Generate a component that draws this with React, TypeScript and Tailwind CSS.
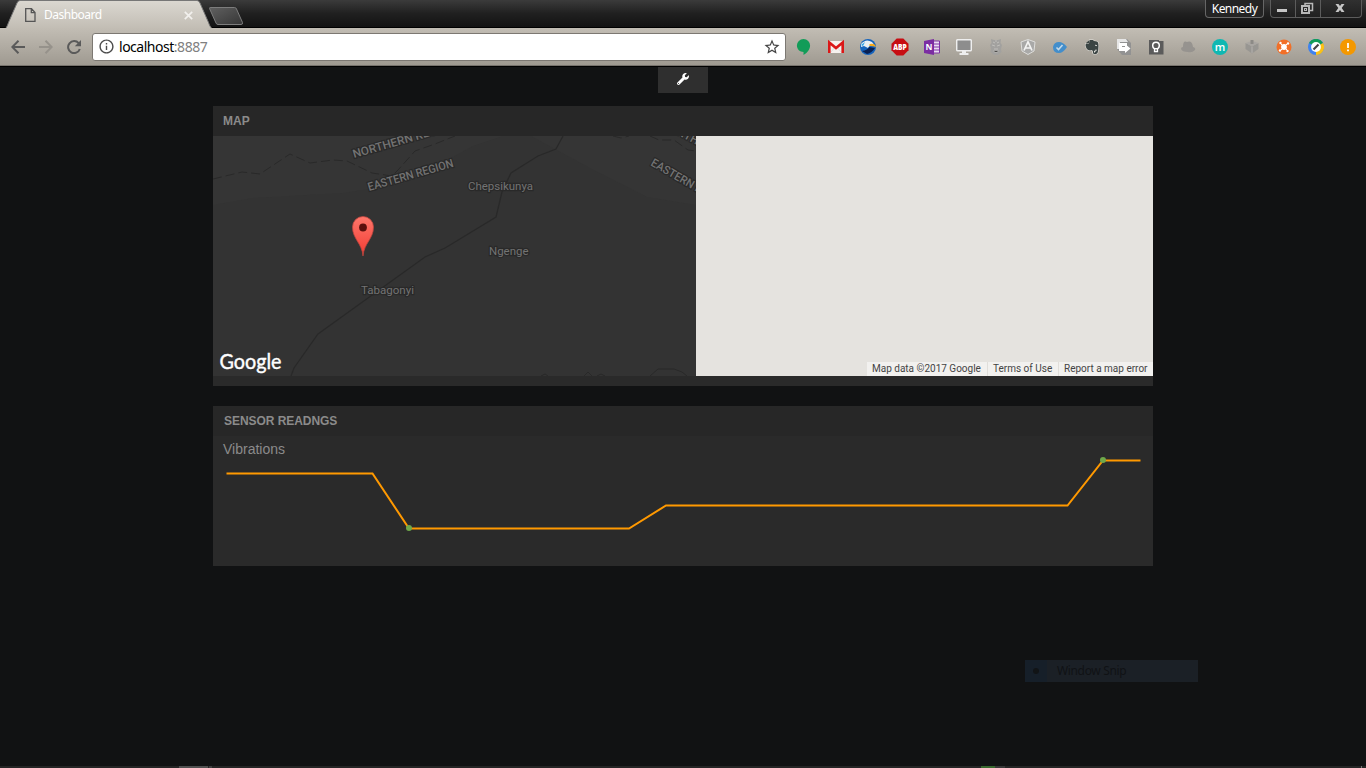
import type { ReactNode } from "react";
import { MdInfoOutline, MdStarBorder } from "react-icons/md";
import { FaWrench } from "react-icons/fa";

function WindowControls() {
  return (
    <div className="relative flex items-start font-['Noto_Sans',sans-serif]">
      <div className="mr-[6px] flex h-[18px] w-[59px] items-center justify-center rounded-b-[4px] border border-t-0 border-[#666] bg-[#242424] pt-[1px] text-[12px] tracking-[-0.55px] text-white">
        Kennedy
      </div>
      <div className="mr-[4px] flex h-[18px] w-[92px] rounded-b-[4px] border border-t-0 border-[#5c5c5c] bg-gradient-to-b from-[#303030] to-[#202020]">
        <div className="flex w-[25px] items-center justify-center border-r border-[#5c5c5c] pr-[2px]">
          <svg width="12" height="18" viewBox="0 0 12 18">
            <rect x="1" y="9" width="10" height="3" fill="#c6c6c6" />
          </svg>
        </div>
        <div className="flex w-[25px] items-center justify-center border-r border-[#5c5c5c] pr-[2px]">
          <svg width="14" height="18" viewBox="0 0 14 18" fill="none" stroke="#b8b8b8">
            <path d="M5 5V3.500H12.500V10.500H10" strokeWidth="1.500" />
            <rect x="2" y="6" width="7" height="7" strokeWidth="2" />
            <rect x="4.500" y="8.500" width="2" height="2" />
          </svg>
        </div>
        <div className="flex grow items-center justify-center pr-[2px]">
          <svg width="12" height="18" viewBox="0 0 12 18">
            <path d="M1.500 4H4.500L6 6L7.500 4H10.500L7.700 8L10.500 12H7.500L6 10L4.500 12H1.500L4.300 8Z" fill="#c6c6c6" />
          </svg>
        </div>
      </div>
    </div>
  );
}

function TabStrip() {
  return (
    <div className="relative flex h-7 justify-between border-b border-black bg-gradient-to-b from-[#3b3b3b] via-[#202020] to-[#131313]">
      <svg className="absolute left-0 top-0" width="250" height="28" viewBox="0 0 250 28">
        <defs>
          <linearGradient id="tab" x1="0" y1="0" x2="0" y2="1">
            <stop offset="0" stopColor="#dbd8d1" />
            <stop offset="1" stopColor="#c2bdb4" />
          </linearGradient>
          <linearGradient id="newtab" x1="0" y1="0" x2="1" y2="1">
            <stop offset="0" stopColor="#606060" />
            <stop offset="1" stopColor="#363636" />
          </linearGradient>
        </defs>
        <path d="M5.500 28.500C7 27 7.500 25 8.500 22.500L17 3Q18 .5 20 .5H197Q199 .5 200 3L208.500 22.500C209.500 25 210 27 212 28.500Z" fill="url(#tab)" stroke="#777" />
        <path d="M209.500 8.500Q209 7.500 211 7.500H234.500Q236 7.500 236.500 9L242.500 22.500Q243 24.500 241 24.500H218Q216.500 24.500 216 23Z" fill="url(#newtab)" stroke="#7d7d7d" />
      </svg>
      <div className="relative flex h-7 w-[198px] items-center pl-[25px] pt-[2px]">
        <svg width="11" height="14" viewBox="0 0 11 14" fill="none" stroke="#555" strokeWidth="1.300">
          <path d="M.7 .7H6.500L10 4.500V13.300H.7ZM6.300 1V4.700H10" />
        </svg>
        <span className="ml-[8px] font-['Noto_Sans',sans-serif] text-[12px] leading-[16px] tracking-[-0.5px] text-white">Dashboard</span>
        <svg className="ml-auto mr-[5px]" width="9" height="9" viewBox="0 0 9 9" stroke="#f2f0ed" strokeWidth="1.700">
          <path d="M.8 .8L8.200 8.200M8.200 .8L.8 8.200" />
        </svg>
      </div>
      <WindowControls />
    </div>
  );
}

const extensions: ReactNode[] = [
  <svg key="hangouts" width="16" height="16" viewBox="0 0 16 16"><path d="M7.500 0A6.600 6.500 0 0 0 .9 6.600C.9 10.400 4 13 7.500 13V16C10.500 14.500 14.100 11 14.100 6.600A6.600 6.500 0 0 0 7.500 0Z" fill="#129c58" /></svg>,
  <svg key="gmail" width="16" height="16" viewBox="0 0 16 16"><path d="M0 2H16V14H0Z" fill="#f6f1ee" /><path d="M3 13L7 8M13 13L9 8" stroke="#ddd" /><path d="M1.300 14V3.500L8 9L14.700 3.500V14" fill="none" stroke="#db1717" strokeWidth="2.600" /></svg>,
  <svg key="eagle" width="16" height="16" viewBox="0 0 16 16"><circle cx="8" cy="8" r="8" fill="#1664bd" /><path d="M1 5Q6-1 12 3L14 5.500L10 6.500L8 9L4 7L1 8Z" fill="#e9eef2" /><path d="M9.500 5Q15 3.500 16 8Q12 6.500 9.500 7Z" fill="#f5a719" /><path d="M2 12Q8 11 9 8L15 9Q12 14 7 15Z" fill="#0a2052" /><path d="M1 6L5 3L3 7Z" fill="#2ca3e8" /></svg>,
  <svg key="abp" width="18" height="18" viewBox="-1 -1 18 18"><path d="M4.700 -.5H11.300L16.500 4.700V11.300L11.300 16.500H4.700L-.5 11.300V4.700Z" fill="#c70d12" /><text x="8" y="11" textAnchor="middle" textLength="13.500" lengthAdjust="spacingAndGlyphs" fontFamily="Open Sans" fontWeight="800" fontSize="8.200" fill="#fff">ABP</text></svg>,
  <svg key="onenote" width="16" height="16" viewBox="0 0 16 16"><path d="M9 2H15.500V14H9Z" fill="#eadcf2" stroke="#8033a6" /><path d="M10 5H15M10 8H15M10 11H15" stroke="#8033a6" /><path d="M0 2L10 0V16L0 14Z" fill="#7b2da2" /><text x="5" y="11" textAnchor="middle" fontFamily="Open Sans" fontWeight="700" fontSize="8.500" fill="#fff">N</text></svg>,
  <svg key="monitor" width="16" height="16" viewBox="0 0 16 16"><rect x=".7" y=".7" width="14.600" height="11" rx="1" fill="#8d8d8d" stroke="#eee" strokeWidth="1.500" /><path d="M6 12H10V14H12.500V16H3.500V14H6Z" fill="#eee" /></svg>,
  <svg key="robot" width="16" height="16" viewBox="0 0 16 16"><path d="M3 0L6 1H10L13 0L12.500 4L14 6L13 10L13.500 13L10 16H6L2.500 13L3 10L2 6L3.500 4Z" fill="#a2a19f" /><path d="M5 3L7 4M11 3L9 4M4 6L7 7M12 6L9 7M6 10H10M5 12L7 13H9L11 12M8 1V3" stroke="#c6c5c2" strokeWidth=".8" /></svg>,
  <svg key="angular" width="16" height="16" viewBox="0 0 16 16"><path d="M8 .5L15 3L14 12L8 15.500L2 12L1 3Z" fill="#a9a9a8" stroke="#dededc" /><path d="M4 11.500L8 2.700L12 11.500M5.700 9H10.300" fill="none" stroke="#f4f4f3" strokeWidth="1.700" /></svg>,
  <svg key="tag" width="16" height="16" viewBox="0 0 16 16"><path d="M1 8Q2 3 7 3Q11 3 15 8Q11 14 7 14Q1 14 1 8Z" fill="#438ecb" /><path d="M4.500 8.500L6.500 10.500L10.500 6" fill="none" stroke="#c5d9e8" strokeWidth="1.600" /></svg>,
  <svg key="evernote" width="16" height="16" viewBox="0 0 16 16"><path d="M5.500 1H9L10 2L13 2.500Q14.500 3 14.500 7Q14.500 12 13.500 14Q12.500 15.500 10 15Q8.500 14.500 9 12.500L8 11L6 11.500Q2 11 1.500 6L2 4.500L5 4.500Z" fill="#3b4544" stroke="#e4e2dd" strokeWidth="1.200" paintOrder="stroke" /><path d="M2 4L5 1.500V4Z" fill="#3b4544" /><path d="M10.500 13.500V12H12V10.500" stroke="#e4e2dd" fill="none" /><path d="M11 6.500Q12 5.500 13 7" stroke="#cfd0ce" fill="none" /></svg>,
  <svg key="export" width="16" height="16" viewBox="0 0 16 16"><path d="M1 0H11L15 4V16H6L1 10Z" fill="#929292" /><path d="M1 0H10L12 3H4V10H1Z" fill="#e6e6e6" /><path d="M3 4H11V7H6V12H3ZM6 8H9V5L14.500 9.500L9 14V12H6Z" fill="#fff" /></svg>,
  <svg key="bulb" width="16" height="16" viewBox="0 0 16 16"><path d="M1 1H11V2H15.500V15.500H1Z" fill="#5b5b5b" /><circle cx="8" cy="6.500" r="3.300" fill="none" stroke="#fff" strokeWidth="1.500" /><path d="M6.500 9V12.500H9.500V9" fill="none" stroke="#fff" strokeWidth="1.300" /></svg>,
  <svg key="hat" width="16" height="16" viewBox="0 0 16 16"><path d="M3 8Q3 1 7 3Q12 1 13 8Q16 9 15 11Q12 14 8 13Q2 13 1 10Q1 8 3 8Z" fill="#96938f" /></svg>,
  <svg key="m" width="16" height="16" viewBox="0 0 16 16"><circle cx="8" cy="8" r="8" fill="#0fb8b2" /><text x="8" y="11.500" textAnchor="middle" fontFamily="Open Sans" fontSize="11" fontWeight="600" fill="#fff">m</text></svg>,
  <svg key="cube" width="16" height="16" viewBox="0 0 16 16"><path d="M1.500 4L8 7L14.500 4V10L8 14.500L1.500 10Z" fill="#989692" /><path d="M1.500 4L8 2L14.500 4L8 7.500Z" fill="#a9a6a2" /><path d="M6.500 1H9.500V5H6.500Z" fill="#8c8a86" /><path d="M8 7.500V14" stroke="#b5b2ae" /></svg>,
  <svg key="hub" width="16" height="16" viewBox="0 0 16 16"><circle cx="8" cy="8" r="7.500" fill="#f26f27" /><path d="M4 4L12 12M12 4L4 12" stroke="#fff" strokeWidth="1" /><circle cx="8" cy="8" r="2.900" fill="#fff" /><circle cx="4.500" cy="4" r="1.200" fill="#fff" /><circle cx="12" cy="4.500" r="1.200" fill="#fff" /><circle cx="4" cy="11.500" r="1.200" fill="#fff" /><circle cx="11.500" cy="12" r="1.200" fill="#fff" /></svg>,
  <svg key="chrome" width="16" height="16" viewBox="0 0 16 16"><circle cx="8" cy="8" r="8" fill="#3e82ef" /><path d="M8 8L1 4A8 8 0 0 1 15 4Z" fill="#129d58" /><path d="M8 8L15 4A8 8 0 0 1 8 16Z" fill="#fbc116" /><circle cx="8" cy="8" r="4.900" fill="#fff" /><path d="M5.500 10.500L10.500 5.500" stroke="#444" strokeWidth="2.200" /></svg>,
  <svg key="alert" width="16" height="16" viewBox="0 0 16 16"><circle cx="8" cy="8" r="8" fill="#f49800" /><path d="M8 4V9M8 10.500V12.300" stroke="#fff" strokeWidth="1.800" /></svg>,
];

function Toolbar() {
  return (
    <div className="flex h-[38px] items-center border-b border-[#77736d] bg-gradient-to-b from-[#c2bdb4] to-[#9f9a91] pl-[11px]">
      <div className="flex w-[81px] items-center gap-[14px]">
        <svg width="14" height="14" viewBox="0 0 14 14" fill="none" stroke="#5a5a5a" strokeWidth="2">
          <path d="M14 7H1.500M7.500 .8L1.300 7L7.500 13.200" />
        </svg>
        <svg width="14" height="14" viewBox="0 0 14 14" fill="none" stroke="#96928b" strokeWidth="2">
          <path d="M0 7H12.500M6.500 .8L12.700 7L6.500 13.200" />
        </svg>
        <svg width="14" height="14" viewBox="0 0 14 14">
          <path d="M11.700 3.200A6 6 0 1 0 12.800 9" fill="none" stroke="#5a5a5a" strokeWidth="2" />
          <path d="M14 0V6.200H7.800Z" fill="#5a5a5a" />
        </svg>
      </div>
      <div className="flex h-[28px] w-[694px] items-center rounded-[3px] border border-[#7c7872] bg-white pl-[5px] pr-[4px]">
        <MdInfoOutline size={17} className="text-[#4b4b4b]" />
        <span className="ml-[4px] font-['Noto_Sans',sans-serif] text-[14px] leading-[20px] tracking-[-0.48px] text-black">
          localhost<span className="text-[#808080]">:8887</span>
        </span>
        <MdStarBorder size={18} className="ml-auto text-[#444]" />
      </div>
      <div className="ml-[2px] flex">
        {extensions.map((icon, i) => (
          <div key={i} className="flex h-5 w-8 items-center justify-center">{icon}</div>
        ))}
      </div>
    </div>
  );
}

function PaneTitle({ children }: { children: ReactNode }) {
  return (
    <div className="h-[30px] bg-[#272727] pl-[10px] font-['Liberation_Sans',sans-serif] text-[12px] font-bold leading-[30px] text-[#8b8b8b]">
      {children}
    </div>
  );
}

function MapTile() {
  return (
    <svg width="483" height="240" viewBox="0 0 483 240" className="block bg-[#333]" fontFamily="Roboto, sans-serif">
      <defs>
        <linearGradient id="pin" x1="0" y1="0" x2="0" y2="1">
          <stop offset="0" stopColor="#ff776b" />
          <stop offset="1" stopColor="#f23b32" />
        </linearGradient>
      </defs>
      <path d="M0 69L40 62L130 57L190 48L260 10L290 0H318L375 31L434 61L483 69V0H0Z" fill="#353535" />
      <g fill="none" stroke="#292929">
        <path strokeDasharray="9 4" d="M0 43L29 36L47 38L77 18L97 27L120 24L134 25L159 37L179 40L185 34L202 15L222 8L242 0M400 0L408 2L416 0M437 0L446 4H461L475 14L483 15" />
        <path strokeWidth="1.300" d="M350 0L343 13L325 20L298 37L289 56L283 81L237 109L232 112L212 121L105 198L81 232L78 240" />
        <path d="M328 240L332 238L335 240M371 240L375 236L379 240M384 240L388 238L392 240M437 240L445 233H461L469 236L474 240" />
      </g>
      <g fill="#737373" stroke="#292929" strokeWidth="2.500" paintOrder="stroke" fontSize="11.500">
        <g fontWeight="500" fontSize="11.500">
          <text transform="translate(141 22) rotate(-16)" textLength="107" lengthAdjust="spacingAndGlyphs">NORTHERN REGION</text>
          <text transform="translate(156 55) rotate(-16)" textLength="88.500" lengthAdjust="spacingAndGlyphs">EASTERN REGION</text>
          <text transform="translate(437 29) rotate(30)" textLength="90" lengthAdjust="spacingAndGlyphs">EASTERN REGION</text>
          <text transform="translate(463 -2) rotate(28)">NTH</text>
        </g>
        <text x="255" y="54" textLength="65" lengthAdjust="spacingAndGlyphs">Chepsikunya</text>
        <text x="276" y="119" textLength="39.500" lengthAdjust="spacingAndGlyphs">Ngenge</text>
        <text x="148" y="158" textLength="53" lengthAdjust="spacingAndGlyphs">Tabagonyi</text>
      </g>
      <path d="M150 120C149 107 139.500 103 139.500 91A10.500 10.500 0 0 1 160.500 91C160.500 103 151 107 150 120Z" fill="url(#pin)" stroke="#bd453f" strokeWidth=".8" />
      <circle cx="150" cy="91.500" r="3.900" fill="#5c100d" />
      <text x="6.500" y="233" textLength="62" lengthAdjust="spacingAndGlyphs" fontFamily="Lato, sans-serif" fontSize="20.500" fontWeight="400" fill="#fff" stroke="#fff" strokeWidth=".4">Google</text>
    </svg>
  );
}

function MapPane() {
  return (
    <section className="h-[280px] bg-[#2a2a2a]">
      <PaneTitle>MAP</PaneTitle>
      <div className="flex h-[240px] bg-[#e5e3df]">
        <MapTile />
        <div className="flex grow items-end justify-end">
          <div className="flex h-[14px] w-[286px] bg-[#f2f1ef] font-['Roboto',sans-serif] text-[10px] leading-[14px] text-[#444]">
            <span className="w-[121px] border-r border-[#e0deda] pl-[5px]">Map data ©2017 Google</span>
            <span className="w-[71px] border-r border-[#e0deda] pl-[5px]">Terms of Use</span>
            <span className="whitespace-nowrap pl-[5px]">Report a map error</span>
          </div>
        </div>
      </div>
    </section>
  );
}

function SensorPane() {
  return (
    <section className="h-[160px] bg-[#2a2a2a]">
      <PaneTitle><span className="ml-[1px] tracking-[-0.05px]">SENSOR READNGS</span></PaneTitle>
      <div className="h-[20px] pl-[10px] pt-[3px] font-['Liberation_Sans',sans-serif] text-[14px] leading-[20px] text-[#8b8b8b]">Vibrations</div>
      <svg width="940" height="110" viewBox="0 20 940 110" className="block">
        <path d="M13.500 37.500H159.500L196 92.500H416L453 69.500H854.500L890 24.500H927.500" fill="none" stroke="#ff9900" strokeWidth="2" />
        <circle cx="196" cy="92" r="3" fill="#6fa84a" />
        <circle cx="890" cy="24" r="3" fill="#6fa84a" />
      </svg>
    </section>
  );
}

export default function App() {
  return (
    <div className="relative flex h-[768px] w-[1366px] flex-col overflow-hidden bg-[#111213]">
      <TabStrip />
      <Toolbar />
      <main className="flex grow flex-col items-center border-t border-black">
        <div className="flex h-[26px] w-[50px] items-center justify-center bg-[#2f2f2f] pb-[2px]">
          <FaWrench size={12} className="text-white" />
        </div>
        <div className="mt-[13px] flex w-[940px] flex-col gap-5">
          <MapPane />
          <SensorPane />
        </div>
      </main>
      <div className="absolute left-[1025px] top-[660px] flex h-[22px] w-[173px] items-center bg-[#1b2026]">
        <div className="flex h-full w-[22px] items-center justify-center bg-[#161f29]">
          <div className="size-[6px] rounded-full bg-[#111416]" />
        </div>
        <span className="ml-[10px] font-['Noto_Sans',sans-serif] text-[12px] tracking-[-0.35px] text-[#101215]">Window Snip</span>
      </div>
      <footer className="flex h-[2px] shrink-0 bg-[#252525]">
        <div className="ml-[179px] w-[29px] bg-[#505050]" />
        <div className="ml-[1px] w-[3px] bg-[#404040]" />
        <div className="ml-[769px] w-[14px] bg-[#39682f]" />
        <div className="w-[10px] bg-[#383838]" />
        <div className="ml-[356px] w-px bg-[#777]" />
      </footer>
    </div>
  );
}
